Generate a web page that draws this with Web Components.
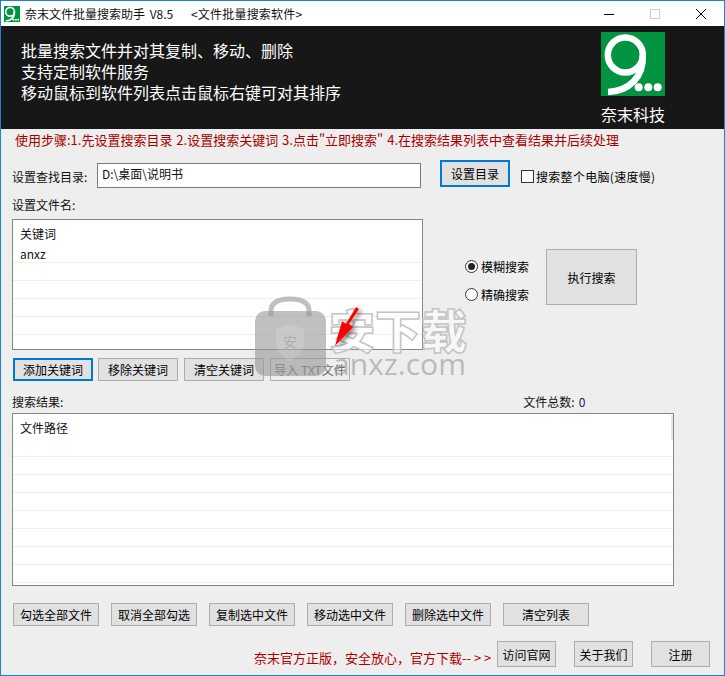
<!DOCTYPE html>
<html lang="zh">
<head>
<meta charset="utf-8">
<title>奈末文件批量搜索助手</title>
<style>
  html, body { margin: 0; padding: 0; background: #eeeeee; }
  body { font: 12px "Noto Sans CJK SC", "Liberation Sans", sans-serif; color: #000; }
</style>
</head>
<body>
<app-window></app-window>

<script>
const FONT = `"Noto Sans CJK SC", "Liberation Sans", sans-serif`;

class ShadowElement extends HTMLElement {
  constructor() {
    super();
    const template = document.createElement("template");
    template.innerHTML = this.constructor.styles + this.constructor.markup;
    this.attachShadow({ mode: "open" });
    this.shadowRoot.appendChild(template.content.cloneNode(true));
  }
  static get styles() { return ""; }
  static get markup() { return "<slot></slot>"; }
}

class NineLogo extends ShadowElement {
  static get styles() {
    return `<style>
      :host { display: block; width: 64px; height: 64px; }
      svg { display: block; width: 100%; height: 100%; }
    </style>`;
  }
  static get markup() {
    return `<svg viewBox="0 0 64 64">
      <rect width="64" height="64" fill="#009440"/>
      <circle cx="24.3" cy="23" r="17.5" fill="none" stroke="#fff" stroke-width="6.5"/>
      <path d="M41.8 23C43 45 28 59 7 60" fill="none" stroke="#fff" stroke-width="6.5"/>
      <circle cx="37.7" cy="55.3" r="4" fill="#fff"/>
      <circle cx="47.3" cy="55.3" r="4" fill="#fff"/>
      <circle cx="56.7" cy="55.3" r="4" fill="#fff"/>
    </svg>`;
  }
}

class TitleBar extends ShadowElement {
  static get styles() {
    return `<style>
      :host { display: flex; align-items: center; height: 25px; background: #fff; font-size: 12px; color: #111; }
      nine-logo { width: 16px; height: 16px; margin: 0 5px 0 3px; }
      .name { width: 166px; white-space: nowrap; word-spacing: 2px; }
      .sub { width: 300px; white-space: nowrap; letter-spacing: .2px; }
      .controls { display: flex; margin-left: auto; }
      .controls svg { display: block; width: 46px; height: 25px; }
    </style>`;
  }
  static get markup() {
    return `<nine-logo></nine-logo>
      <span class="name">奈末文件批量搜索助手 V8.5</span>
      <span class="sub">&lt;文件批量搜索软件&gt;</span>
      <div class="controls">
        <svg viewBox="0 0 46 25"><path d="M18 13.5h10" stroke="#000" stroke-width="1"/></svg>
        <svg viewBox="0 0 46 25"><rect x="18.5" y="8.5" width="9" height="9" fill="none" stroke="#ccc"/></svg>
        <svg viewBox="0 0 46 25"><path d="M18 8l10 10M28 8l-10 10" stroke="#000" stroke-width="1" fill="none"/></svg>
      </div>`;
  }
}

class HeroBanner extends ShadowElement {
  static get styles() {
    return `<style>
      :host { display: flex; height: 103px; background: #171717; color: #fff; box-sizing: border-box; padding: 6px 0 0 20px; }
      .lines { flex: 1; padding-top: 8px; font-size: 16px; line-height: 21px; }
      .brand { width: 64px; margin-right: 59px; }
      .brand div { font-size: 16px; line-height: 21px; margin-top: 8px; white-space: nowrap; }
    </style>`;
  }
  static get markup() {
    return `<div class="lines">
        <div>批量搜索文件并对其复制、移动、删除</div>
        <div>支持定制软件服务</div>
        <div>移动鼠标到软件列表点击鼠标右键可对其排序</div>
      </div>
      <div class="brand"><nine-logo></nine-logo><div>奈末科技</div></div>`;
  }
}

class WinButton extends ShadowElement {
  static get styles() {
    return `<style>
      :host { display: flex; align-items: center; justify-content: center; box-sizing: border-box; flex: none;
        background: #e1e1e1; border: 1px solid #adadad; font-size: 12px; color: #000; white-space: nowrap; }
      :host([focused]) { border: 2px solid #0078d7; }
      :host([disabled]) { background: #eeeeee; color: #6d6d6d; }
    </style>`;
  }
}

class ListRow extends ShadowElement {
  static get styles() {
    return `<style>
      :host { display: flex; align-items: center; box-sizing: border-box; height: 18px; padding-left: 7px;
        border-bottom: 1px solid #eeeeee; font-size: 12px; color: #111; }
      :host([plain]) { border-bottom: 0; }
    </style>`;
  }
}

class ListBox extends ShadowElement {
  static get styles() {
    return `<style>
      :host { display: block; position: relative; box-sizing: border-box; background: #fff; border: 1px solid #82878c; overflow: hidden; flex: none; }
    </style>`;
  }
}

class CheckField extends ShadowElement {
  static get styles() {
    return `<style>
      :host { display: flex; align-items: center; gap: 2px; font-size: 12px; white-space: nowrap; }
      .box { width: 13px; height: 13px; box-sizing: border-box; border: 1px solid #333; background: #fff; flex: none; }
    </style>`;
  }
  static get markup() { return `<span class="box"></span><slot></slot>`; }
}

class RadioField extends ShadowElement {
  static get styles() {
    return `<style>
      :host { display: flex; align-items: center; gap: 3px; font-size: 12px; white-space: nowrap; }
      .dot { width: 13px; height: 13px; box-sizing: border-box; border: 1px solid #333; border-radius: 50%; background: #fff;
        display: flex; align-items: center; justify-content: center; flex: none; }
      :host([checked]) .dot::after { content: ""; width: 7px; height: 7px; border-radius: 50%; background: #222; }
    </style>`;
  }
  static get markup() { return `<span class="dot"></span><slot></slot>`; }
}

class WaterMark extends ShadowElement {
  static get styles() {
    return `<style>
      :host { display: block; position: absolute; left: 253px; top: 295px; width: 220px; height: 85px; pointer-events: none; }
      svg { position: absolute; left: 0; top: 0; overflow: visible; }
      .big { position: absolute; left: 75px; top: 5px; font: 900 46px/54px ${FONT}; white-space: nowrap;
        color: rgba(255,255,255,.55); -webkit-text-stroke: 1.5px #c4c4c4; }
      .site { position: absolute; left: 79px; top: 52px; font: 400 30px/32px "Open Sans", sans-serif; white-space: nowrap; color: rgba(150,150,150,.6); }
      .arrow { filter: drop-shadow(3px 2px 2px rgba(0,0,0,.45)); }
    </style>`;
  }
  static get markup() {
    return `<svg width="75" height="82" viewBox="0 0 75 82">
        <path d="M17 20V15C17 7 24 3 36 3S55 7 55 15V20" fill="none" stroke="rgba(150,150,150,.6)" stroke-width="5"/>
        <rect x="1" y="15" width="71" height="65" rx="10" fill="rgba(150,150,150,.6)"/>
        <path d="M22 33L36 28L50 33V46C50 55 43 61 36 65C29 61 22 55 22 46Z" fill="rgba(255,255,255,.14)"/>
        <text x="36" y="51" text-anchor="middle" font-size="14" font-family="Noto Sans CJK SC" fill="rgba(150,150,150,.55)">安</text>
      </svg>
      <div class="big">安下载</div>
      <div class="site">anxz.com</div>
      <svg class="arrow" width="110" height="60" viewBox="0 0 110 60">
        <polygon points="102,11 105,13 95,28 99,31 81,50 88,25 92,28" fill="#f00"/>
      </svg>`;
  }
}

class AppWindow extends ShadowElement {
  static get styles() {
    return `<style>
      :host { display: block; position: relative; width: 725px; height: 676px; box-sizing: border-box; overflow: hidden;
        border: 1px solid #1883d7; background: #eeeeee; font-family: ${FONT}; }
      .body { padding-left: 11px; }
      .steps { height: 20px; margin-left: 3px; display: flex; align-items: center; font-size: 13px; word-spacing: 1px; color: #a80000; white-space: pre; }
      .dir { display: flex; height: 28px; margin-top: 11px; }
      .dir .lbl { width: 85px; padding-top: 9px; line-height: 16px; }
      .input { width: 324px; height: 25px; margin-top: 3px; box-sizing: border-box; background: #fff; border: 1px solid #7a7a7a;
        padding: 0 0 5px 4px; display: flex; align-items: center; color: #111; }
      .dir win-button { width: 70px; height: 27px; margin-left: 19px; }
      .dir check-field { margin: 8px 0 0 11px; align-self: flex-start; letter-spacing: .3px; }
      .lbl { font-size: 12px; color: #111; white-space: nowrap; }
      .name-lbl { height: 16px; line-height: 16px; margin-top: 9px; }
      .mid { display: flex; margin-top: 6px; }
      .mid list-box { width: 411px; height: 131px; }
      .radios { width: 81px; margin: 41px 0 0 42px; display: flex; flex-direction: column; gap: 15px; }
      .radios radio-field { height: 13px; }
      .mid win-button { width: 91px; height: 56px; margin-top: 30px; }
      .keys { display: flex; gap: 6px; margin: 8px 0 0 1px; }
      .keys win-button { width: 80px; height: 23px; }
      .keys win-button:nth-child(2) { margin-left: -1px; }
      .res-lbl { display: flex; height: 16px; line-height: 16px; margin-top: 13px; }
      .res-lbl .total { margin-left: 460px; }
      .count { color: #1a1a60; margin-left: 4px; }
      .results { width: 662px; height: 173px; margin-top: 3px; }
      .thumb { position: absolute; right: 0; top: 1px; width: 2px; height: 25px; background: #e4e4e4; }
      .actions { display: flex; gap: 12px; margin: 17px 0 0 1px; }
      .actions win-button { width: 86px; height: 23px; }
      .foot { display: flex; align-items: flex-end; margin-top: 15px; }
      .notice { width: 243px; margin-left: 242px; font-size: 13px; line-height: 18px; color: #b00000; white-space: nowrap; }
      .foot win-button { width: 59px; height: 26px; }
      .foot win-button + win-button { margin-left: 18px; }
      .notice + win-button { margin-left: 0; }
    </style>`;
  }
  static get markup() {
    const blank = (n) => "<list-row></list-row>".repeat(n);
    return `<title-bar></title-bar>
      <hero-banner></hero-banner>
      <div class="body">
        <div class="steps">使用步骤:1.先设置搜索目录 2.设置搜索关键词 3.点击"立即搜索" 4.在搜索结果列表中查看结果并后续处理</div>
        <div class="dir">
          <span class="lbl">设置查找目录:</span>
          <div class="input">D:\\桌面\\说明书</div>
          <win-button focused>设置目录</win-button>
          <check-field>搜索整个电脑(速度慢)</check-field>
        </div>
        <div class="lbl name-lbl">设置文件名:</div>
        <div class="mid">
          <list-box>
            <list-row plain style="height:25px;padding-top:2px">关键词</list-row>
            <list-row>anxz</list-row>
            ${blank(6)}
          </list-box>
          <div class="radios">
            <radio-field checked>模糊搜索</radio-field>
            <radio-field>精确搜索</radio-field>
          </div>
          <win-button>执行搜索</win-button>
        </div>
        <div class="keys">
          <win-button focused>添加关键词</win-button>
          <win-button>移除关键词</win-button>
          <win-button>清空关键词</win-button>
          <win-button disabled>导入 TXT文件</win-button>
        </div>
        <div class="lbl res-lbl"><span>搜索结果:</span><span class="total">文件总数:</span><span class="count">0</span></div>
        <list-box class="results">
          <list-row plain style="height:26px">文件路径</list-row>
          <list-row style="height:17px"></list-row>
          ${blank(8)}
          <div class="thumb"></div>
        </list-box>
        <div class="actions">
          <win-button>勾选全部文件</win-button>
          <win-button>取消全部勾选</win-button>
          <win-button>复制选中文件</win-button>
          <win-button>移动选中文件</win-button>
          <win-button>删除选中文件</win-button>
          <win-button>清空列表</win-button>
        </div>
        <div class="foot">
          <span class="notice">奈末官方正版，安全放心，官方下载-- &gt; &gt;</span>
          <win-button>访问官网</win-button>
          <win-button>关于我们</win-button>
          <win-button>注册</win-button>
        </div>
      </div>
      <water-mark></water-mark>`;
  }
}

customElements.define("nine-logo", NineLogo);
customElements.define("title-bar", TitleBar);
customElements.define("hero-banner", HeroBanner);
customElements.define("win-button", WinButton);
customElements.define("list-row", ListRow);
customElements.define("list-box", ListBox);
customElements.define("check-field", CheckField);
customElements.define("radio-field", RadioField);
customElements.define("water-mark", WaterMark);
customElements.define("app-window", AppWindow);
</script>
</body>
</html>
